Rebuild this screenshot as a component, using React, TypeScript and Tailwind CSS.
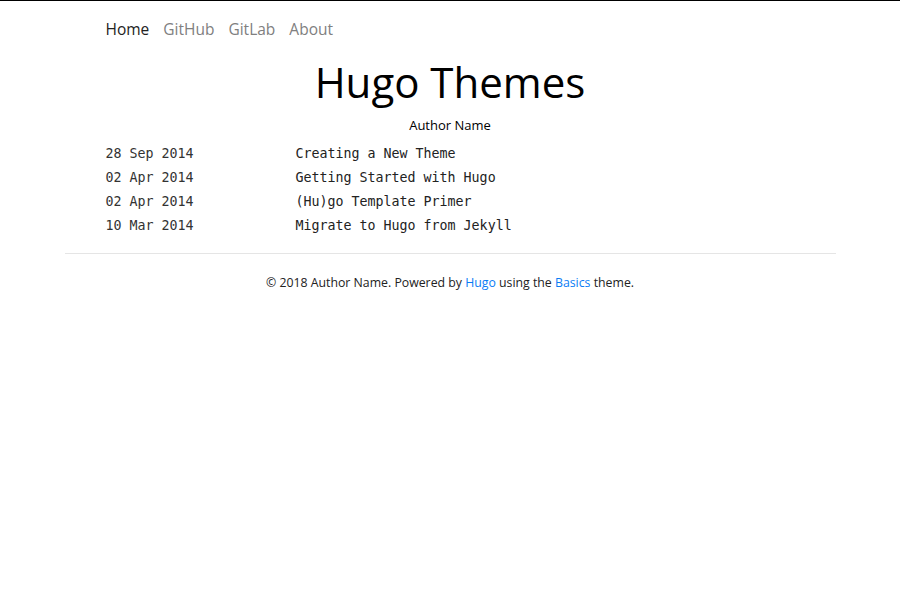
export default function App() {
  const posts = [
    { date: '28 Sep 2014', title: 'Creating a New Theme' },
    { date: '02 Apr 2014', title: 'Getting Started with Hugo' },
    { date: '02 Apr 2014', title: '(Hu)go Template Primer' },
    { date: '10 Mar 2014', title: 'Migrate to Hugo from Jekyll' },
  ]

  return (
    <div className="min-h-screen bg-white border-t border-black text-black font-['Open_Sans',sans-serif]">
      <div className="mx-auto w-[771px]">
        {/* Nav */}
        <nav className="flex gap-[14px] px-[41px] pt-[16px] text-[15.5px] leading-[24px]">
          <a className="text-[#222]">Home</a>
          <a className="text-[#808080]">GitHub</a>
          <a className="text-[#808080]">GitLab</a>
          <a className="text-[#808080]">About</a>
        </nav>

        {/* Header */}
        <div className="text-center mt-[15px]">
          <h1 className="text-[42px] leading-[52px]">Hugo Themes</h1>
          <p className="text-[13px] leading-[18px] mt-[8px]">Author Name</p>
        </div>

        {/* Posts */}
        <div className="px-[41px] mt-[8px] pb-[15px] font-['DejaVu_Sans_Mono',monospace] text-[13.3px] text-[#222]">
          {posts.map((post) => (
            <div key={post.title} className="flex h-[24px] items-center">
              <span className="w-[190px] text-[#333]">{post.date}</span>
              <span>{post.title}</span>
            </div>
          ))}
        </div>

        <hr className="border-t border-[#e5e5e5]" />

        {/* Footer */}
        <p className="text-center text-[12.3px] leading-[18px] mt-[20px] text-[#222]">
          © 2018 Author Name. Powered by <a className="text-[#0a7cf5]">Hugo</a> using the{' '}
          <a className="text-[#0a7cf5]">Basics</a> theme.
        </p>
      </div>
    </div>
  )
}
